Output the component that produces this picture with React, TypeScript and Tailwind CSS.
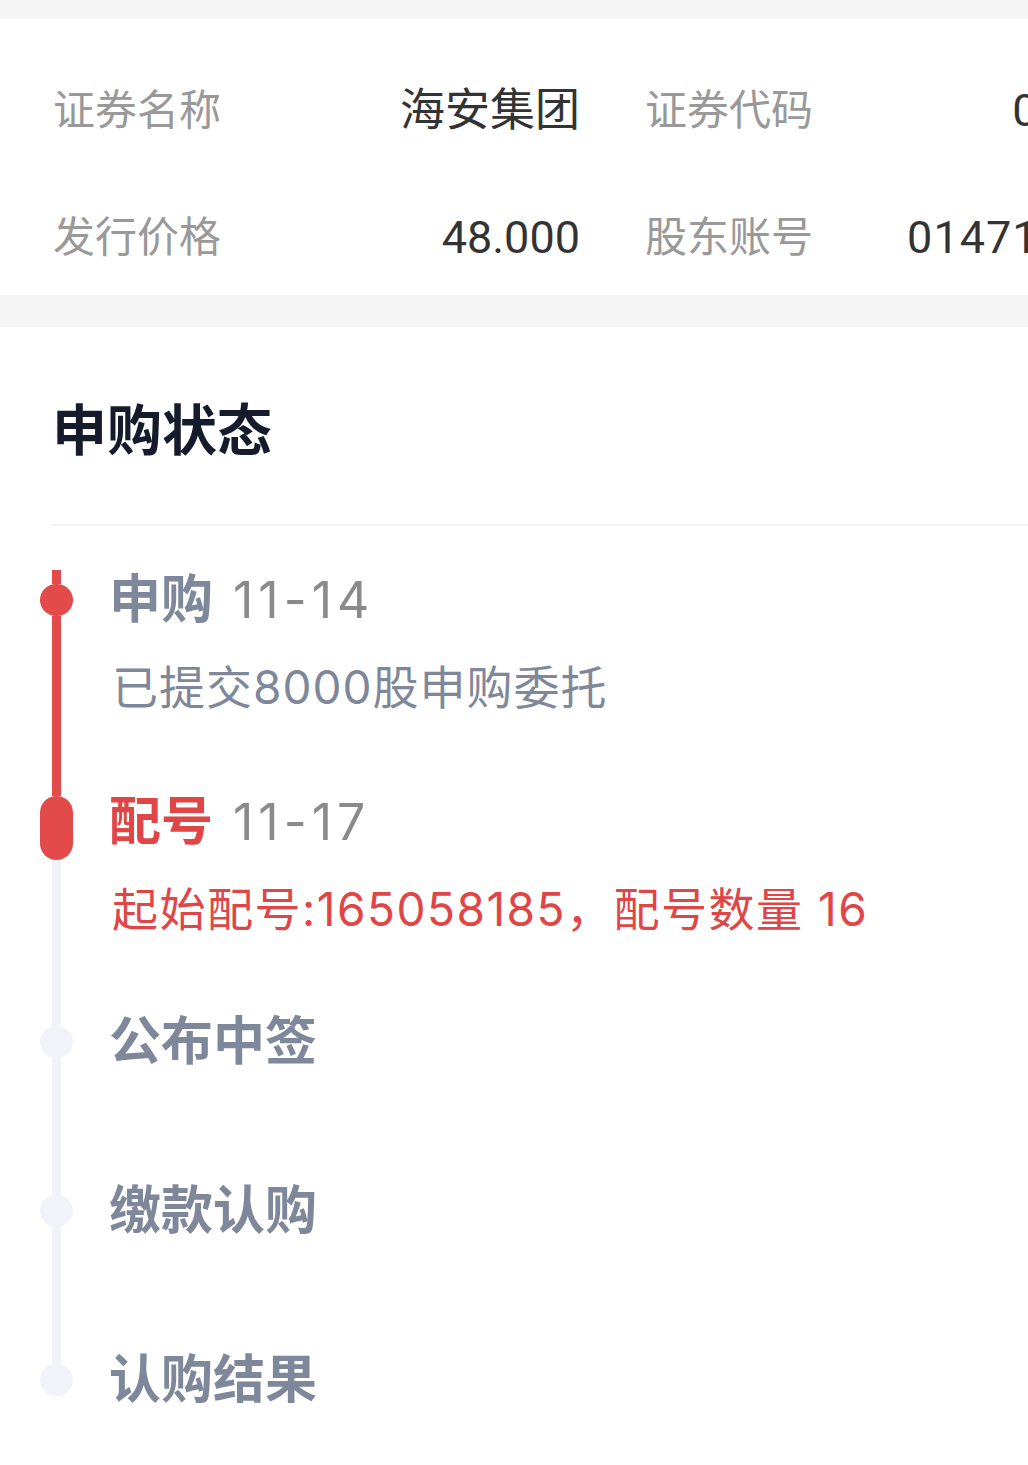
import React from 'react';

const topFont = "font-['Roboto','Noto_Sans_CJK_SC',sans-serif]";
const bodyFont = "font-['Inter','Noto_Sans_CJK_SC',sans-serif]";

interface InfoRowProps {
  label1: string;
  value1: string;
  label2: string;
  value2: string;
}

const InfoRow: React.FC<InfoRowProps> = ({ label1, value1, label2, value2 }) => (
  <div className="flex h-[127px] items-center">
    <div className="w-[580px] pl-[53px] flex items-center justify-between">
      <span className="text-[42px] text-[#999999] leading-none">{label1}</span>
      <span className="text-[45px] text-[#333333] leading-none">{value1}</span>
    </div>
    <div className="w-[590px] pl-[65px] flex items-center justify-between">
      <span className="text-[42px] text-[#999999] leading-none">{label2}</span>
      <span className="text-[45px] text-[#333333] leading-none tracking-[1px]">{value2}</span>
    </div>
  </div>
);

type DotKind = 'dot' | 'pill';

interface StepProps {
  title: string;
  date?: string;
  desc?: string;
  active?: boolean;
  dot: DotKind;
  done?: boolean;
  bottomRed?: boolean;
  last?: boolean;
  heightClass: string;
}

const Step: React.FC<StepProps> = ({ title, date, desc, active, dot, done, bottomRed, last, heightClass }) => {
  const red = 'bg-[#e34a4a]';
  const gray = 'bg-[#f1f3f8]';
  return (
    <div className={`flex ${heightClass}`}>
      {/* rail */}
      <div className="w-[33px] ml-[40px] flex flex-col items-center shrink-0">
        {dot === 'pill' ? (
          <>
            <div className={`w-[9px] h-[4px] ${red}`} />
            <div className={`w-[33px] h-[64px] rounded-full ${red}`} />
          </>
        ) : (
          <>
            <div className={`w-[9px] h-[14px] ${done ? red : gray}`} />
            <div className={`w-[33px] h-[32px] rounded-full ${done ? red : gray}`} />
          </>
        )}
        {!last && <div className={`w-[9px] flex-1 ${bottomRed ? red : gray}`} />}
      </div>

      <div className="ml-[36px] flex flex-col">
        <div className="h-[60px] flex items-center">
          <span className={`text-[52px] font-bold leading-none ${active ? 'text-[#e04646]' : 'text-[#7f889b]'}`}>
            {title}
          </span>
          {date && (
            <span className="ml-[20px] text-[50px] text-[#8a8a8a] leading-none tracking-[5px]">{date}</span>
          )}
        </div>
        {desc && (
          <div className="h-[60px] mt-[27px] flex items-center">
            <span
              className={`ml-[3px] text-[46px] leading-none ${
                active ? 'text-[#e04646] tracking-[1.5px]' : 'text-[#7f889b] tracking-[1px]'
              }`}
            >
              {desc}
            </span>
          </div>
        )}
      </div>
    </div>
  );
};

const App: React.FC = () => {
  return (
    <div className="w-full min-h-[1465px] overflow-hidden bg-white">
      <div className="w-[1200px]">
        <div className="h-[19px] bg-[#f5f5f5]" />
        <div className={`h-[276px] pt-[28px] overflow-hidden bg-white ${topFont}`}>
          <InfoRow label1="证券名称" value1="海安集团" label2="证券代码" value2="001233" />
          <InfoRow label1="发行价格" value1="48.000" label2="股东账号" value2="0147123456" />
        </div>
        <div className="h-[32px] bg-[#f5f5f5]" />

        <div className={`pt-[70px] ${bodyFont}`}>
          <h2 className="pl-[52px] h-[66px] flex items-center text-[55px] font-bold text-[#151b2b] leading-none">
            申购状态
          </h2>
          <div className="ml-[52px] mt-[61px] h-[2px] bg-[#f2f4f7]" />
        </div>

        <div className={`pt-[44px] ${bodyFont}`}>
          <Step
            title="申购"
            date="11-14"
            desc="已提交8000股申购委托"
            heightClass="h-[222px]"
            dot="dot"
            done
            bottomRed
          />
          <Step
            title="配号"
            date="11-17"
            desc="起始配号:165058185，配号数量 16"
            active
            heightClass="h-[220px]"
            dot="pill"
          />
          <Step title="公布中签" heightClass="h-[169px]" dot="dot" />
          <Step title="缴款认购" heightClass="h-[169px]" dot="dot" />
          <Step title="认购结果" heightClass="h-[115px]" dot="dot" last />
        </div>
      </div>
    </div>
  );
};

export default App;
